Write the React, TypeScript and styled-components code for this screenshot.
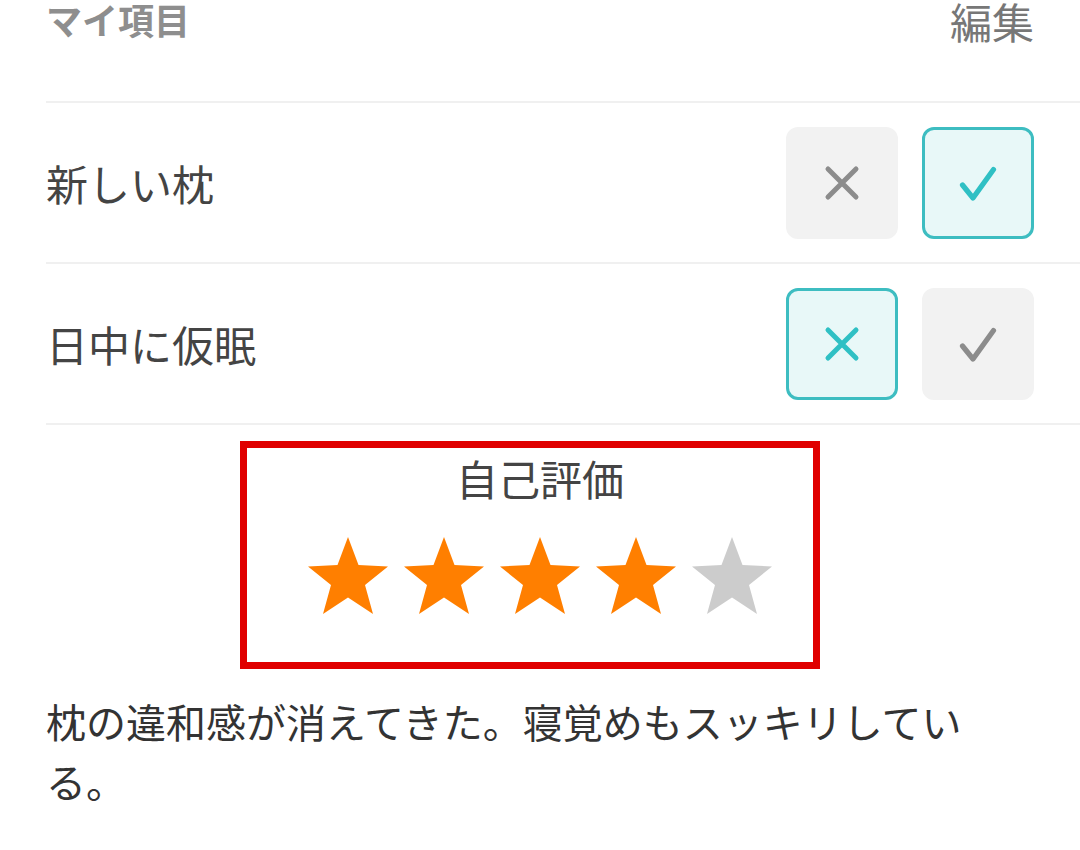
import React from "react"
import styled, { createGlobalStyle } from "styled-components"

const GlobalStyle = createGlobalStyle`
  html, body {
    margin: 0;
    padding: 0;
    background: #ffffff;
  }
  body {
    font-family: "Noto Sans CJK JP", "Noto Sans", sans-serif;
    color: #444444;
  }
`

type Choice = "yes" | "no"

const items: { label: string; choice: Choice }[] = [
  { label: "新しい枕", choice: "yes" },
  { label: "日中に仮眠", choice: "no" },
]

const App = (): JSX.Element => {
  const rating = 4
  return (
    <Page>
      <GlobalStyle />
      <Header>
        <HeaderTitle>マイ項目</HeaderTitle>
        <EditLink>編集</EditLink>
      </Header>
      {items.map(item => (
        <ItemRow key={item.label}>
          <ItemLabel>{item.label}</ItemLabel>
          <Toggles>
            <ToggleButton active={item.choice === "no"} aria-label="いいえ">
              <svg viewBox="0 0 40 40">
                <path d="M6 6 L34 34 M34 6 L6 34" strokeWidth="5" strokeLinecap="round" fill="none" />
              </svg>
            </ToggleButton>
            <ToggleButton active={item.choice === "yes"} aria-label="はい">
              <svg viewBox="0 0 40 40">
                <path d="M4.5 22 L15 35 L35.5 6.5" strokeWidth="5.2" strokeLinecap="round" strokeLinejoin="round" fill="none" />
              </svg>
            </ToggleButton>
          </Toggles>
        </ItemRow>
      ))}
      <RatingSection>
        <RatingTitle>自己評価</RatingTitle>
        <Stars>
          {[1, 2, 3, 4, 5].map(n => (
            <Star key={n} filled={n <= rating} viewBox="0 0 80 78">
              <polygon points="40,0 50.5,28 80,29.5 57,48 65,77 40,60.5 15,77 23,48 0,29.5 29.5,28" />
            </Star>
          ))}
        </Stars>
        <Highlight />
      </RatingSection>
      <Note>枕の違和感が消えてきた。寝覚めもスッキリしている。</Note>
    </Page>
  )
}

const Page = styled.div`
  width: 1080px;
  padding-left: 46px;
  box-sizing: border-box;
`

const Header = styled.div`
  display: flex;
  justify-content: space-between;
  align-items: flex-start;
  height: 107px;
  box-sizing: border-box;
  padding-right: 46px;
  border-bottom: 2px solid #f0f0f0;
  margin-top: -4px;
`

const HeaderTitle = styled.div`
  font-size: 36px;
  font-weight: 700;
  color: #8e8e8e;
  line-height: 46px;
`

const EditLink = styled.div`
  font-size: 42px;
  color: #777777;
  line-height: 50px;
`

const ItemRow = styled.div`
  display: flex;
  align-items: center;
  justify-content: space-between;
  height: 161px;
  box-sizing: border-box;
  padding-right: 46px;
  border-bottom: 2px solid #f0f0f0;
`

const ItemLabel = styled.div`
  font-size: 42px;
  color: #444444;
`

const Toggles = styled.div`
  display: flex;
  gap: 24px;
`

const ToggleButton = styled.div<{ active: boolean }>`
  width: 112px;
  height: 112px;
  box-sizing: border-box;
  border-radius: 12px;
  display: flex;
  align-items: center;
  justify-content: center;
  background: ${props => (props.active ? "#e8f8f8" : "#f2f2f2")};
  border: 3px solid ${props => (props.active ? "#3dbdc1" : "#f2f2f2")};

  svg {
    width: 40px;
    height: 40px;
    stroke: ${props => (props.active ? "#2fc0c4" : "#8c8c8c")};
  }
`

const RatingSection = styled.div`
  position: relative;
  display: flex;
  flex-direction: column;
  align-items: center;
  padding: 22px 46px 0 0;
  height: 244px;
  box-sizing: border-box;
`

const RatingTitle = styled.div`
  font-size: 42px;
  line-height: 62px;
  color: #444444;
`

const Stars = styled.div`
  display: flex;
  gap: 16px;
  margin-top: 28px;
`

const Star = styled.svg<{ filled: boolean }>`
  width: 80px;
  height: 78px;
  fill: ${props => (props.filled ? "#ff7f00" : "#cccccc")};
`

const Highlight = styled.div`
  position: absolute;
  left: 194px;
  top: 16px;
  width: 580px;
  height: 228px;
  box-sizing: border-box;
  border: 7px solid #e00000;
  pointer-events: none;
`

const Note = styled.p`
  margin: 22px 0 0;
  width: 950px;
  font-size: 40px;
  line-height: 60px;
  color: #333333;
`

export default App
